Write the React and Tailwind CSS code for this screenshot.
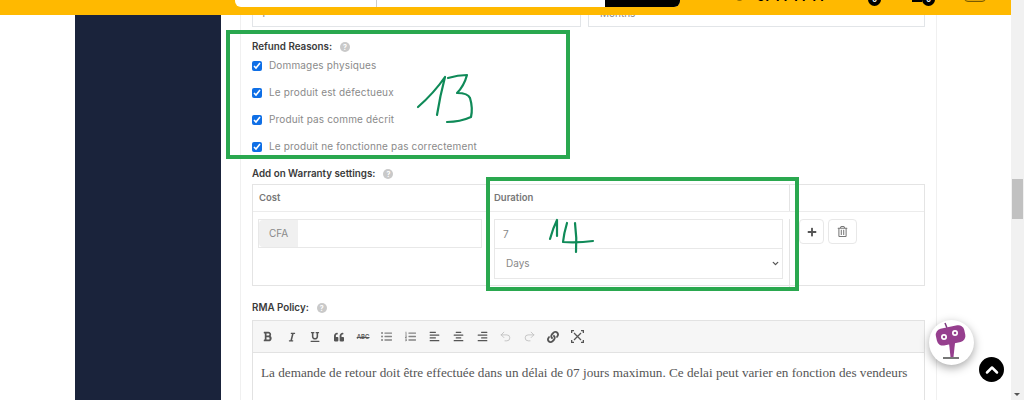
import React from "react";
import { Undo2, Redo2, ChevronDown, ChevronUp } from "lucide-react";
import { FaBold, FaItalic, FaUnderline, FaQuoteLeft, FaListUl, FaListOl, FaAlignLeft, FaAlignCenter, FaAlignRight, FaLink, FaPlus, FaRegTrashAlt } from "react-icons/fa";

const reasons = [
    "Dommages physiques",
    "Le produit est défectueux",
    "Produit pas comme décrit",
    "Le produit ne fonctionne pas correctement",
];

function Help() {
    return <span className="ml-2 flex size-[10px] items-center justify-center rounded-full bg-[#c9c9c9] text-[7px] font-bold leading-none text-white">?</span>;
}

function Label({ children }) {
    return (
        <div className="flex h-[14px] items-center pt-[2px] text-[9.8px] font-semibold text-[#3a3a3a]">
            {children}
            <Help />
        </div>
    );
}

function ToolIcon({ children }) {
    return <span className="flex w-[23.8px] items-center justify-center text-[#555]">{children}</span>;
}

function Toolbar() {
    return (
        <div className="flex h-[32px] items-center border-b border-[#e2e2e2] bg-[#f6f6f6] pl-[3px]">
            <ToolIcon><FaBold size={11} /></ToolIcon>
            <ToolIcon><FaItalic size={10} /></ToolIcon>
            <ToolIcon><FaUnderline size={10} /></ToolIcon>
            <ToolIcon><FaQuoteLeft size={10} /></ToolIcon>
            <ToolIcon><span className="text-[6px] font-semibold line-through">ABC</span></ToolIcon>
            <ToolIcon><FaListUl size={11} className="opacity-70" /></ToolIcon>
            <ToolIcon><FaListOl size={11} className="opacity-70" /></ToolIcon>
            <ToolIcon><FaAlignLeft size={11} /></ToolIcon>
            <ToolIcon><FaAlignCenter size={11} /></ToolIcon>
            <ToolIcon><FaAlignRight size={11} /></ToolIcon>
            <ToolIcon><Undo2 size={13} strokeWidth={1.5} className="text-[#bbb]" /></ToolIcon>
            <ToolIcon><Redo2 size={13} strokeWidth={1.5} className="text-[#bbb]" /></ToolIcon>
            <ToolIcon><FaLink size={12} /></ToolIcon>
            <ToolIcon>
                <svg width="13" height="13" viewBox="0 0 13 13" fill="none" stroke="currentColor" strokeWidth="1.3">
                    <path d="M3 3l7 7M10 3l-7 7" />
                    <path d="M0.5 3V0.5H3M10 0.5h2.5V3M12.5 10v2.5H10M3 12.5H0.5V10" strokeWidth="1.6" />
                </svg>
            </ToolIcon>
        </div>
    );
}

function WarrantyTable() {
    return (
        <div className="mt-[4px] h-[102px] border border-[#e4e4e4]">
            <div className="grid h-[27px] grid-cols-[234px_303px_1fr] border-b border-[#ececec] text-[9.5px] font-semibold text-[#777]">
                <div className="flex items-center pl-[6px]">Cost</div>
                <div className="flex items-center border-r border-[#e4e4e4] pl-[7px]">Duration</div>
                <div></div>
            </div>
            <div className="grid grid-cols-[234px_303px_1fr] pt-[7px] text-[10px] text-[#888]">
                <div className="px-[5px]">
                    <div className="flex h-[29px] border border-[#e8e8e8]">
                        <div className="flex w-[39px] items-center justify-center rounded-l-sm bg-[#f0f0f0]">CFA</div>
                    </div>
                </div>
                <div className="h-[72px] border-r border-[#e4e4e4] pl-[7px] pr-[6px]">
                    <div className="flex h-[30px] items-center border border-[#e8e8e8] pl-[8px]">7</div>
                    <div className="relative">
                        <select defaultValue="Days" className="h-[30px] w-full appearance-none border border-t-0 border-[#e8e8e8] bg-white pl-[11px] text-[10px] text-[#888]">
                            <option>Days</option>
                        </select>
                        <ChevronDown size={9} strokeWidth={3.5} className="absolute right-[3px] top-[10px] text-[#555]" />
                    </div>
                </div>
                <div className="flex items-start gap-[4px] pl-[9px]">
                    <button className="flex h-[25px] w-[25px] items-center justify-center rounded-sm border border-[#e8e8e8] text-[#555]"><FaPlus size={10} /></button>
                    <button className="flex h-[25px] w-[29px] items-center justify-center rounded-sm border border-[#e8e8e8] text-[#777]"><FaRegTrashAlt size={11} /></button>
                </div>
            </div>
        </div>
    );
}

function Header() {
    return (
        <div className="flex h-[15px] overflow-hidden bg-[#ffb900] pl-[235px]">
            <div className="-mt-[33px] flex h-[40px] w-[445px] overflow-hidden rounded-md bg-white">
                <div className="w-[142px] border-r border-[#ccc]"></div>
                <div className="flex-1"></div>
                <div className="w-[75px] bg-black"></div>
            </div>
            <div className="-mt-[10px] ml-[55px] flex h-[13px] w-[99px] items-center">
                <span className="size-[9px] rounded-full border border-[#7a5b00]"></span>
                <span className="ml-[13px] text-[12px] font-bold tracking-[0.4px] text-black">97 77 77 77</span>
            </div>
            <div className="-mt-[7px] ml-[34px] flex size-[13px] items-center justify-center rounded-full bg-black text-[7px] font-bold leading-none text-white">0</div>
            <div className="ml-[31px] h-[2px] w-[10px] bg-black"></div>
            <div className="-mt-[7px] flex size-[13px] items-center justify-center rounded-full bg-black text-[7px] font-bold leading-none text-white">0</div>
            <div className="-mt-[20px] ml-[29px] h-[22px] w-[22px] rounded-sm border border-[#7a5b00] bg-[#e0a40a]"></div>
        </div>
    );
}

function Annotations() {
    return (
        <>
            <div className="absolute left-[226px] top-[30px] h-[129px] w-[344px] border-[4px] border-[#2aa84f]"></div>
            <div className="absolute left-[486px] top-[177px] h-[114px] w-[313px] border-[4px] border-[#2aa84f]"></div>
            <svg className="absolute left-0 top-0" width="1024" height="400" fill="none" stroke="#0f8a58" strokeWidth="2.2" strokeLinecap="round" strokeLinejoin="round">
                <path d="M418 107Q434 93 445 77Q440 96 437 115" />
                <path d="M448 78Q458 75 467 75Q464 86 457 93Q468 93 470 98Q473 108 471 117Q460 122 447 122" />
                <path d="M550 239Q553 228 557 220Q557 228 557 236" />
                <path d="M567 223Q564 233 563 242Q578 243 593 241" />
                <path d="M575 223Q577 238 576 252" />
            </svg>
            <div className="absolute left-[929px] top-[320px] size-[45px] rounded-full bg-white shadow-[0_3px_10px_rgba(0,0,0,0.35)]">
                <svg width="45" height="45" viewBox="0 0 45 45">
                    <path d="M16 3l2 5" stroke="#7a3a7e" strokeWidth="1.5" />
                    <rect x="7" y="7" width="29" height="17" rx="6" fill="#963f8e" transform="rotate(-12 21 15)" />
                    <circle cx="15" cy="17" r="3" fill="#fff" />
                    <circle cx="26" cy="13" r="3" fill="#fff" />
                    <circle cx="15" cy="17" r="1.3" fill="#963f8e" />
                    <circle cx="26" cy="13" r="1.3" fill="#963f8e" />
                    <path d="M20 23h6l-1.5 14h-3z" fill="#963f8e" />
                    <path d="M14 38h16" stroke="#777" strokeWidth="2" />
                </svg>
            </div>
            <div className="absolute left-[979px] top-[357px] flex size-[25px] items-center justify-center rounded-full bg-black text-white">
                <ChevronUp size={20} strokeWidth={3} />
            </div>
        </>
    );
}

function App() {
    return (
        <div className="relative flex h-[400px] w-[1024px] overflow-hidden bg-white font-['Inter',sans-serif]">
            <div className="w-[1011px]">
                <Header />
                <div className="flex h-[385px]">
                    <div className="ml-[75px] w-[146px] bg-[#1a233b]"></div>
                    <div className="ml-[19px] w-[697px] border-x border-[#f0f0f0] px-[11px]">
                        <div className="flex h-[12px] gap-[7px] text-[10px] leading-none text-[#888]">
                            <div className="w-[329px] overflow-hidden border-x border-b border-[#e2e5e8] pl-[8px]"><div className="-mt-[7px]">1</div></div>
                            <div className="flex-1 overflow-hidden border-x border-b border-[#e2e5e8] pl-[11px]"><div className="-mt-[7px]">Months</div></div>
                        </div>
                        <div className="mt-[12px]"><Label>Refund Reasons:</Label></div>
                        <div className="-mt-[1px]">
                            {reasons.map((r) => (
                                <div key={r} className="flex h-[27px] items-center">
                                    <input type="checkbox" defaultChecked className="size-[10px] accent-[#0f6fe6]" />
                                    <span className="ml-[7px] text-[10px] tracking-[0.15px] text-[#8a8a8a]">{r}</span>
                                </div>
                            ))}
                        </div>
                        <div className="mt-[6px]"><Label>Add on Warranty settings:</Label></div>
                        <WarrantyTable />
                        <div className="mt-[14px]"><Label>RMA Policy:</Label></div>
                        <div className="mt-[6px] h-[90px] border border-[#e2e2e2]">
                            <Toolbar />
                            <p className="pl-[8px] pt-[12px] font-['Liberation_Serif',serif] text-[13.2px] leading-[15px] text-[#555]">La demande de retour doit être effectuée dans un délai de 07 jours maximun. Ce delai peut varier en fonction des vendeurs</p>
                        </div>
                    </div>
                </div>
            </div>
            <div className="relative w-[13px] bg-[#f1f1f1]">
                <div className="ml-[1px] mt-[179px] h-[40px] w-[11px] bg-[#c1c1c1]"></div>
                <div className="absolute bottom-[4px] left-[3px] size-0 border-x-[3px] border-t-[3px] border-x-transparent border-t-[#555]"></div>
            </div>
            <Annotations />
        </div>
    );
}

export default App;
